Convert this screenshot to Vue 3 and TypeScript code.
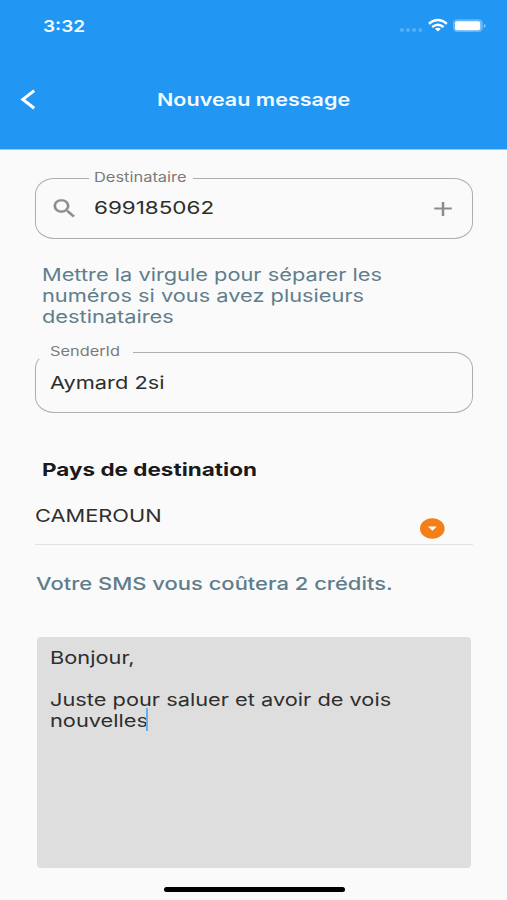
<script setup lang="ts">
import { ref } from 'vue'

const title = 'Nouveau message'
const recipient = ref('699185062')
const senderId = ref('Aymard 2si')
const country = ref('CAMEROUN')
const credits = ref(2)
const hintLines = ['Mettre la virgule pour séparer les', 'numéros si vous avez plusieurs', 'destinataires']
const messageLines = ref(['Bonjour,', '', 'Juste pour saluer et avoir de vois', 'nouvelles'])
</script>

<template>
  <div class="screen">
    <header class="header">
      <div class="status">
        <span class="wide time">3:32</span>
        <svg class="status-icons" width="88" height="18" viewBox="0 0 88 18">
          <g fill="#fff" fill-opacity="0.24">
            <circle cx="3.9" cy="13" r="2" />
            <circle cx="10" cy="13" r="2" />
            <circle cx="16.1" cy="13" r="2" />
            <circle cx="22.3" cy="13" r="2" />
          </g>
          <g fill="none" stroke="#fff" stroke-width="2.4">
            <path d="M30.9 6.7 Q39.9 -0.5 48.9 6.7" />
            <path d="M34.2 10 Q39.9 5.4 45.6 10" />
          </g>
          <path d="M36.9 11.8 Q39.9 9.6 42.9 11.8 L39.9 14.6Z" fill="#fff" />
          <rect x="54.9" y="2.2" width="30" height="12.9" rx="4.8" ry="4" fill="#fff" fill-opacity="0.3" />
          <rect x="57" y="4.2" width="25.2" height="9" rx="2" ry="1.7" fill="#fff" />
          <path d="M85.8 6.9 Q87.8 7.4 87.8 8.8 Q87.8 10.2 85.8 10.7Z" fill="#fff" fill-opacity="0.45" />
        </svg>
      </div>
      <div class="bar">
        <svg class="back" width="16" height="22" viewBox="0 0 16 22">
          <path d="M14.2 1.6 L2.9 10.4 L14.2 19.3" fill="none" stroke="#fff" stroke-width="3.1" />
        </svg>
        <h1 class="wide title">{{ title }}</h1>
      </div>
    </header>

    <main class="form">
      <section class="field">
        <label class="label recipient-label"><span class="wide">Destinataire</span></label>
        <svg class="search" width="29" height="25" viewBox="0 0 24 24" preserveAspectRatio="none">
          <path fill="#8c8c8c" stroke="#8c8c8c" stroke-width="0.25" d="M15.5 14h-.79l-.28-.27A6.471 6.471 0 0 0 16 9.5 6.5 6.5 0 1 0 9.5 16c1.61 0 3.09-.59 4.23-1.57l.27.28v.79l5 4.99L20.49 19l-4.99-5zm-6 0C7.01 14 5 11.99 5 9.5S7.01 5 9.5 5 14 7.01 14 9.5 11.99 14 9.5 14z" />
        </svg>
        <span class="wide digits">{{ recipient }}</span>
        <svg class="add" width="30" height="24" viewBox="0 0 24 24" preserveAspectRatio="none">
          <path fill="#8c8c8c" d="M19 12.5h-6V19h-2v-6.5H5v-2h6V5h2v5.5h6z" />
        </svg>
      </section>

      <p class="hint">
        <span v-for="line in hintLines" :key="line" class="wide">{{ line }}</span>
      </p>

      <section class="field sender">
        <label class="label sender-label"><span class="wide">SenderId</span></label>
        <span class="wide sender-value">{{ senderId }}</span>
      </section>

      <h2 class="wide heading">Pays de destination</h2>

      <div class="select">
        <span class="wide country">{{ country }}</span>
        <svg class="dropdown" width="25" height="21" viewBox="0 0 25 21">
          <ellipse cx="12.3" cy="10.5" rx="12.3" ry="10.3" fill="#f57f17" />
          <path d="M8 8.6 H16.8 L12.4 12.7Z" fill="#fff" />
        </svg>
      </div>

      <p class="wide cost">Votre SMS vous coûtera {{ credits }} crédits.</p>

      <div class="message">
        <div v-for="(line, i) in messageLines" :key="i" class="line">
          <span class="wide">{{ line }}</span><i v-if="i === messageLines.length - 1" class="caret"></i>
        </div>
      </div>
    </main>

    <div class="home"></div>
  </div>
</template>

<style>
body {
  margin: 0;
  background: #fafafa;
}
</style>

<style scoped>
.screen {
  box-sizing: border-box;
  width: 507px;
  height: 900px;
  display: flex;
  flex-direction: column;
  overflow: hidden;
  background: #fafafa;
  color: #2e2e2e;
  font: 400 17.6px/21px Inter, sans-serif;
}
.wide {
  display: block;
  width: max-content;
  margin: 0;
  white-space: nowrap;
  transform: scaleX(1.238);
  transform-origin: left center;
}
.header {
  flex: none;
  height: 149px;
  background: #2196f3;
  border-bottom: 1px solid #90cbf9;
  color: #f2faff;
}
.status {
  display: flex;
  justify-content: space-between;
  align-items: center;
  height: 52px;
  padding: 0 21px 0 42.5px;
}
.time {
  font-size: 16.4px;
  font-weight: 600;
  transform: scaleX(1.16);
}
.bar {
  display: flex;
  align-items: center;
  height: 95px;
  padding-left: 20px;
}
.title {
  margin-left: 121px;
  font-size: 17.6px;
  font-weight: 600;
  transform: scaleX(1.224);
}
.form {
  display: flex;
  flex-direction: column;
  padding: 28px 34px 0 35px;
}
.field {
  position: relative;
  box-sizing: border-box;
  display: flex;
  align-items: center;
  height: 61px;
  padding: 0 14px;
  border: 1.4px solid #aeaeae;
  border-radius: 19px / 16px;
}
.label {
  position: absolute;
  top: -10px;
  height: 16px;
  background: #fafafa;
  color: #7a7a7a;
  font-size: 13.2px;
  line-height: 16px;
}
.recipient-label {
  left: 53px;
  width: 99px;
  padding-left: 5px;
}
.recipient-label .wide {
  transform: scaleX(1.246);
}
.sender-label {
  left: 3px;
  width: 83px;
  padding-left: 11px;
}
.search {
  margin: 0 15px 0 0;
}
.digits {
  margin-bottom: 2px;
  transform: scaleX(1.275);
}
.add {
  margin-left: auto;
}
.hint {
  margin: 25px 0 25px 6.5px;
  color: #607d8b;
}
.heading {
  margin: 46px 0 0 6.7px;
  color: #1a1a1a;
  font-size: 17.6px;
  font-weight: 700;
  transform: scaleX(1.278);
}
.select {
  display: flex;
  justify-content: space-between;
  height: 39px;
  margin-top: 25px;
  padding-right: 28px;
  border-bottom: 1px solid #e2e2e2;
}
.dropdown {
  margin-top: 13px;
}
.cost {
  margin: 28px 0 0 0.7px;
  color: #607d8b;
  font-weight: 500;
  transform: scaleX(1.249);
}
.message {
  box-sizing: border-box;
  width: 434px;
  height: 231px;
  margin: 43px 0 0 2px;
  padding: 10px 13px;
  border-radius: 4px;
  background: #dedede;
}
.line {
  position: relative;
  height: 21px;
}
.caret {
  position: absolute;
  left: 96px;
  top: -2px;
  width: 2px;
  height: 23px;
  background: #64aef2;
}
.home {
  width: 181px;
  height: 5px;
  margin: 19px 0 0 163.5px;
  border-radius: 3px;
  background: #000;
}
</style>
